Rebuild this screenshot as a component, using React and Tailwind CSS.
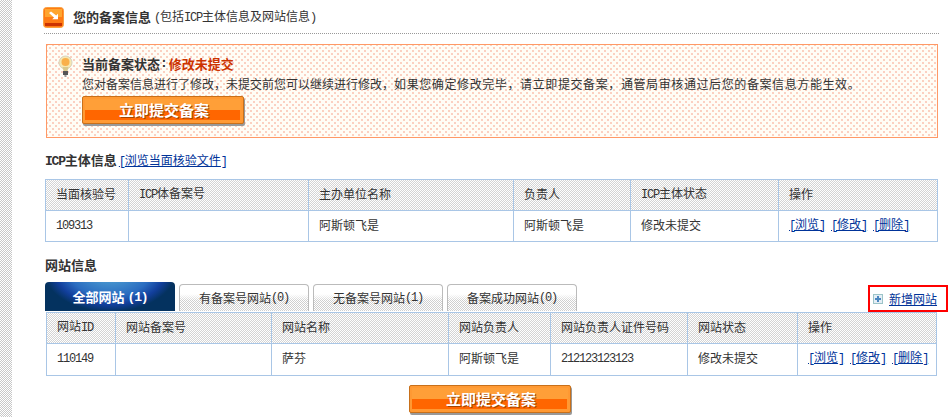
import React from "react";

const CJK = "font-['Noto_Sans_CJK_SC','Noto_Sans',sans-serif]";
const COMMA = "\uFF0C";

// the reference uses half-width latin, 6px a character
function L({ children }) {
  return <span className="font-['Liberation_Mono',monospace] tracking-[-1.2px]">{children}</span>;
}

function ArrowIcon() {
  return (
    <svg width="21" height="21" viewBox="0 0 21 21" className="shrink-0">
      <rect x="0.5" y="0.5" width="20" height="20" rx="3" fill="#ff7a14" stroke="#f9a040" />
      <rect x="2" y="2" width="17" height="8" fill="#ffa52e" />
      <rect x="2" y="16" width="17" height="3" fill="#cc3300" />
      <path d="M6 6l5 4.5-1.8 1.8H15V6.8l-1.8 1.8L8 4.5z" fill="#fff" />
    </svg>
  );
}

function BulbIcon() {
  return (
    <svg width="15" height="24" viewBox="0 0 15 24" className="shrink-0">
      <circle cx="7.5" cy="7.5" r="6.5" fill="#f6e7b0" stroke="#d8d4c0" />
      <circle cx="7.5" cy="7" r="4" fill="#f9b04a" />
      <path d="M4.5 12h6l-1 4h-4z" fill="#d9c88a" />
      <rect x="5" y="16" width="5" height="4" fill="#555" />
      <rect x="6.5" y="20" width="2" height="2" fill="#999" />
    </svg>
  );
}

function PlusIcon() {
  return (
    <svg width="10" height="10" viewBox="0 0 10 10" className="shrink-0">
      <rect x="0.5" y="0.5" width="9" height="9" fill="#e4eef6" stroke="#9cc4c8" />
      <path d="M5 2v6M2 5h6" stroke="#4a86c0" strokeWidth="2" />
    </svg>
  );
}

function SubmitButton({ className }) {
  return (
    <button
      className={`relative flex h-[28px] w-[162px] flex-col overflow-hidden rounded-[2px] border border-[#c8701a] bg-[#ff9933] shadow-[1px_2px_0_#999] ${className}`}
    >
      <span className="mx-[2px] mt-[2px] h-[11px] bg-[#ff9f38]" />
      <span className="ml-[2px] mr-[3px] h-[10px] bg-[#ff6600]" />
      <span className="absolute inset-0 flex items-center justify-center pl-[2px] text-[15px] font-bold text-white [text-shadow:1px_1px_0_#a64400]">
        立即提交备案
      </span>
    </button>
  );
}

function Ops() {
  return (
    <span className="flex gap-[6px] text-[#003399] underline">
      <a><L>[</L>浏览<L>]</L></a>
      <a><L>[</L>修改<L>]</L></a>
      <a><L>[</L>删除<L>]</L></a>
    </span>
  );
}

function DataTable({ widths, heads, cells, className, rowHeights }) {
  return (
    <table className={`table-fixed border-collapse border border-[#a9c6e6] text-[12px] text-[#333] ${className}`}>
      <colgroup>
        {widths.map((w, i) => (
          <col key={i} style={{ width: w }} />
        ))}
      </colgroup>
      <tbody>
        <tr style={{ height: rowHeights[0] }} className="bg-[repeating-conic-gradient(#d4d4d4_0_25%,#ffffff_0_50%)] bg-[length:2px_2px]">
          {heads.map((h, i) => (
            <th key={i} className="border border-[#a9c6e6] pb-[3px] pl-[10px] text-left font-normal">
              {h}
            </th>
          ))}
        </tr>
        <tr style={{ height: rowHeights[1] }}>
          {cells.map((c, i) => (
            <td key={i} className="border border-[#a9c6e6] pb-[3px] pl-[10px]">
              {c}
            </td>
          ))}
        </tr>
      </tbody>
    </table>
  );
}

function Tab({ label, count }) {
  return (
    <div className="flex h-[27px] w-[130px] items-center justify-center rounded-t-[4px] border border-b-0 border-[#bbb] bg-[linear-gradient(#fff_0,#fff_35%,transparent_60%),repeating-conic-gradient(#cfcfcf_0_25%,#ffffff_0_50%)] bg-[length:auto,2px_2px] text-[12px] text-[#333]">
      <span>{label}</span>
      <L>{count}</L>
    </div>
  );
}

export default function App() {
  return (
    <div className={`flex h-[417px] w-[950px] overflow-hidden bg-white ${CJK}`}>
      <div className="w-[12px] shrink-0 bg-[repeating-conic-gradient(#c8c8c8_0_25%,#ffffff_0_50%)] bg-[length:2px_2px]" />

      <div className="relative flex w-[938px] flex-col pl-[33px]">
        <div className="-ml-[1px] mr-[11px] h-[34px] border-b border-dotted border-[#999] pt-[7px]">
          <div className="-ml-[1px] flex items-start gap-[9px]">
            <ArrowIcon />
            <div className="flex h-[19px] items-center text-[12px] text-[#333]">
              <span className="text-[13px] font-bold">您的备案信息</span>
              <span className="ml-[3px]">
                <L>(</L>包括<L>ICP</L>主体信息及网站信息<L>)</L>
              </span>
            </div>
          </div>
        </div>

        <div className="ml-[1px] mr-[12px] mt-[10px] flex h-[94px] gap-[9px] border border-[#ff9966] bg-[#fffdf6] bg-[radial-gradient(#fbcfbf_0.7px,transparent_0.9px),radial-gradient(#fbcfbf_0.7px,transparent_0.9px)] bg-[length:6px_6px] bg-[position:0_0,3px_3px] pl-[11px] pt-[10px]">
          <BulbIcon />
          <div className="flex flex-col text-[12px] text-[#333]">
            <div className="flex h-[18px] items-center text-[13px] font-bold">
              当前备案状态<L>:</L>
              <span className="ml-[2px] text-[#cc3300]">修改未提交</span>
            </div>
            <div className="h-[21px] whitespace-nowrap leading-[21px]">
              您对备案信息进行了修改{COMMA}未提交前您可以继续进行修改{COMMA}
              <span className="tracking-[0.6px]">
                如果您确定修改完毕{COMMA}请立即提交备案{COMMA}通管局审核通过后您的备案信息方能生效。
              </span>
            </div>
            <SubmitButton className="mt-[2px]" />
          </div>
        </div>

        <div className="mt-[14px] flex h-[18px] items-center text-[12px] text-[#333]">
          <span className="text-[13px] font-bold">
            <L>ICP</L>主体信息
          </span>
          <a className="ml-[2px] text-[#003399] underline">
            <L>[</L>浏览当面核验文件<L>]</L>
          </a>
        </div>

        <DataTable
          className="mt-[9px] w-[892px]"
          widths={[83, 180, 205, 117, 148, 159]}
          rowHeights={[31, 31]}
          heads={["当面核验号", <><L>ICP</L>体备案号</>, "主办单位名称", "负责人", <><L>ICP</L>主体状态</>, "操作"]}
          cells={[<L>109313</L>, "", "阿斯顿飞是", "阿斯顿飞是", "修改未提交", <Ops />]}
        />

        <div className="mt-[15px] h-[25px] text-[13px] font-bold leading-[16px] text-[#333]">网站信息</div>

        <div className="flex h-[29px] items-end gap-[4px]">
          <div className="flex h-[29px] w-[130px] items-center justify-center rounded-t-[4px] bg-[radial-gradient(ellipse_at_50%_-40%,#5bb0d8_0,#2a6cc0_45%,#123f9c_60%,#04325f_72%)] text-[13px] font-bold text-white">
            全部网站<span className="ml-[3px]"><L>(1)</L></span>
          </div>
          <Tab label="有备案号网站" count="(0)" />
          <Tab label="无备案号网站" count="(1)" />
          <Tab label="备案成功网站" count="(0)" />
        </div>

        <DataTable
          className="ml-[1px] mt-[1px] w-[890px]"
          widths={[69, 156, 177, 102, 137, 110, 139]}
          rowHeights={[31, 32]}
          heads={[<>网站<L>ID</L></>, "网站备案号", "网站名称", "网站负责人", "网站负责人证件号码", "网站状态", "操作"]}
          cells={[<L>110149</L>, "", "萨芬", "阿斯顿飞是", <L>212123123123</L>, "修改未提交", <Ops />]}
        />

        <div className="ml-[364px] mt-[9px]">
          <SubmitButton />
        </div>

        <div className="absolute left-[856px] top-[285px] flex h-[27px] w-[80px] items-center gap-[6px] border-2 border-[#ff0000] bg-white pl-[3px] text-[12px] text-[#003399] underline">
          <PlusIcon />
          <a>新增网站</a>
        </div>
      </div>
    </div>
  );
}
